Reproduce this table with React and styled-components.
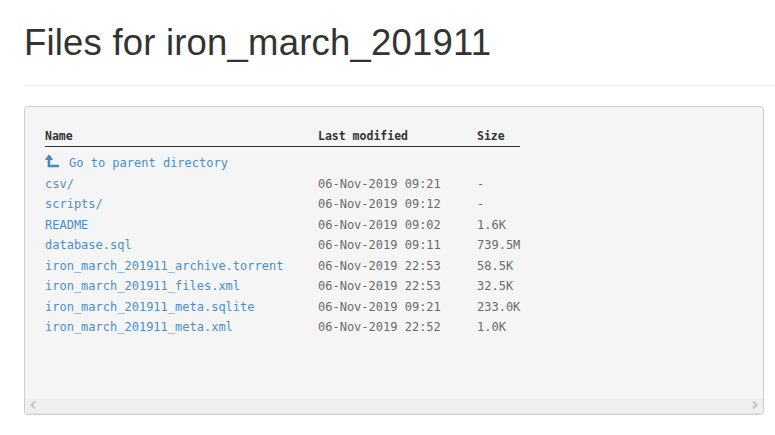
import React from "react";
import styled, { createGlobalStyle } from "styled-components";

const Global = createGlobalStyle`
  html, body { margin: 0; padding: 0; background: #fff; }
  body { font-family: "Liberation Sans", Arial, sans-serif; color: #333; }
`;

const Page = styled.div`
  padding: 23px 11px 0 24px;
  width: 775px;
  box-sizing: border-box;
`;

const Title = styled.h1`
  margin: 0;
  font-size: 36.5px;
  font-weight: 400;
  line-height: 40px;
  color: #333;
  letter-spacing: 0.2px;
`;

const Rule = styled.hr`
  border: 0;
  border-top: 1px solid #eee;
  margin: 22px -11px 20px 0;
`;

const Panel = styled.div`
  border: 1px solid #ccc;
  border-radius: 4px;
  background: #f5f5f5;
  display: flex;
  flex-direction: column;
  overflow: hidden;
`;

const Listing = styled.div`
  padding: 19px 20px 59px 20px;
  font-family: "DejaVu Sans Mono", "Liberation Mono", monospace;
  font-size: 12px;
`;

const Grid = styled.div`
  display: grid;
  grid-template-columns: 273px 159px 43px;
  width: max-content;
`;

const Head = styled.div`
  font-weight: bold;
  color: #333;
  line-height: 20px;
  border-bottom: 1px solid #333;
  margin-bottom: 6px;
  white-space: nowrap;
  font-size: 11.5px;
`;

const Cell = styled.div`
  line-height: 20.5px;
  white-space: nowrap;
  color: ${(p) => (p.$link ? "#428bca" : "#6a6a6a")};
  display: flex;
  align-items: center;
`;

const Link = styled.a`
  color: #4a8fc9;
  text-decoration: none;
`;

const ParentIcon = styled.svg`
  width: 16px;
  height: 16px;
  margin-right: 8px;
  margin-top: -4px;
  flex: none;
`;

const Scrollbar = styled.div`
  height: 15px;
  background: #efefef;
  border-top: 1px solid #f8f8f8;
  border-bottom: 1px solid #e4e4e4;
  display: flex;
  justify-content: space-between;
  align-items: center;
  padding: 0 5px;
`;

const Arrow = styled.svg`
  width: 7px;
  height: 8px;
`;

const rows = [
  ["csv/", "06-Nov-2019 09:21", "-"],
  ["scripts/", "06-Nov-2019 09:12", "-"],
  ["README", "06-Nov-2019 09:02", "1.6K"],
  ["database.sql", "06-Nov-2019 09:11", "739.5M"],
  ["iron_march_201911_archive.torrent", "06-Nov-2019 22:53", "58.5K"],
  ["iron_march_201911_files.xml", "06-Nov-2019 22:53", "32.5K"],
  ["iron_march_201911_meta.sqlite", "06-Nov-2019 09:21", "233.0K"],
  ["iron_march_201911_meta.xml", "06-Nov-2019 22:52", "1.0K"],
];

export default function App() {
  return (
    <>
      <Global />
      <Page>
        <Title>Files for iron_march_201911</Title>
        <Rule />
        <Panel>
          <Listing>
            <Grid>
              <Head>Name</Head>
              <Head>Last modified</Head>
              <Head>Size</Head>
              <Cell $link>
                <ParentIcon viewBox="0 0 16 16">
                  <path d="M4 3 L4 13 L14 13" fill="none" stroke="#428bca" strokeWidth="2.6" />
                  <path d="M0.5 6.5 L4 2 L7.5 6.5 Z" fill="#428bca" stroke="#428bca" strokeWidth="1" strokeLinejoin="round" />
                </ParentIcon>
                <Link href="#">Go to parent directory</Link>
              </Cell>
              <Cell />
              <Cell />
              {rows.map(([n, d, s]) => (
                <React.Fragment key={n}>
                  <Cell $link>
                    <Link href="#">{n}</Link>
                  </Cell>
                  <Cell>{d}</Cell>
                  <Cell>{s}</Cell>
                </React.Fragment>
              ))}
            </Grid>
          </Listing>
          <Scrollbar>
            <Arrow viewBox="0 0 7 8">
              <path d="M5 0.5 L1.5 4 L5 7.5" fill="none" stroke="#c4c4c4" strokeWidth="2" />
            </Arrow>
            <Arrow viewBox="0 0 7 8">
              <path d="M2 0.5 L5.5 4 L2 7.5" fill="none" stroke="#c4c4c4" strokeWidth="2" />
            </Arrow>
          </Scrollbar>
        </Panel>
      </Page>
    </>
  );
}
